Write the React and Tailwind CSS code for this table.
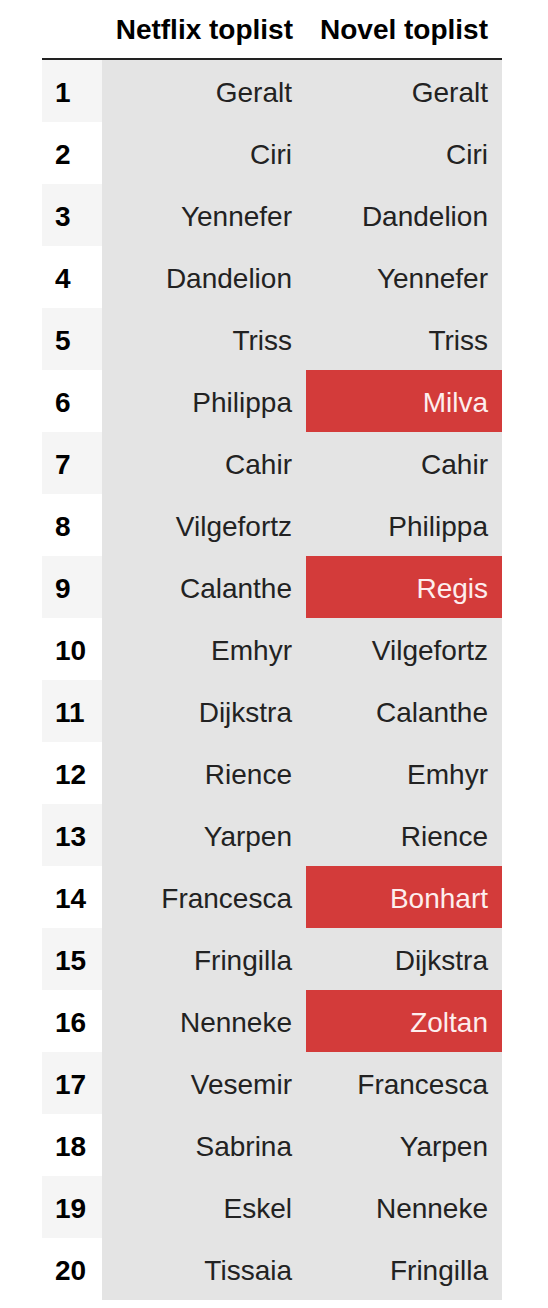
const rows = [
  ["Geralt", "Geralt", false],
  ["Ciri", "Ciri", false],
  ["Yennefer", "Dandelion", false],
  ["Dandelion", "Yennefer", false],
  ["Triss", "Triss", false],
  ["Philippa", "Milva", true],
  ["Cahir", "Cahir", false],
  ["Vilgefortz", "Philippa", false],
  ["Calanthe", "Regis", true],
  ["Emhyr", "Vilgefortz", false],
  ["Dijkstra", "Calanthe", false],
  ["Rience", "Emhyr", false],
  ["Yarpen", "Rience", false],
  ["Francesca", "Bonhart", true],
  ["Fringilla", "Dijkstra", false],
  ["Nenneke", "Zoltan", true],
  ["Vesemir", "Francesca", false],
  ["Sabrina", "Yarpen", false],
  ["Eskel", "Nenneke", false],
  ["Tissaia", "Fringilla", false],
];

export default function App() {
  return (
    <div
      className="w-[548px] h-[1308px] bg-white pl-[42px]"
      style={{ fontFamily: '"Liberation Sans", Arial, sans-serif' }}
    >
      <div className="w-[460px]">
        <div className="grid grid-cols-[60px_204px_196px] h-[60px] items-center text-[28px] font-bold text-black border-b-2 border-[#222] pt-[1px]">
          <div />
          <div className="text-right pr-[13px]">Netflix toplist</div>
          <div className="text-right pr-[14px]">Novel toplist</div>
        </div>
        {rows.map(([a, b, hl], i) => (
          <div key={i} className="grid grid-cols-[60px_204px_196px] h-[62px] text-[28px]">
            <div
              className={
                "flex items-center pt-[3px] pl-[13px] font-bold text-black " +
                (i % 2 === 0 ? "bg-[#f5f5f5]" : "bg-white")
              }
            >
              {i + 1}
            </div>
            <div className="flex items-center justify-end pt-[3px] pr-[14px] bg-[#e4e4e4] text-[#222]">
              {a}
            </div>
            <div
              className={
                "flex items-center justify-end pt-[3px] pr-[14px] " +
                (hl ? "bg-[#d33b3a] text-[#fdeeee]" : "bg-[#e4e4e4] text-[#222]")
              }
            >
              {b}
            </div>
          </div>
        ))}
      </div>
    </div>
  );
}
